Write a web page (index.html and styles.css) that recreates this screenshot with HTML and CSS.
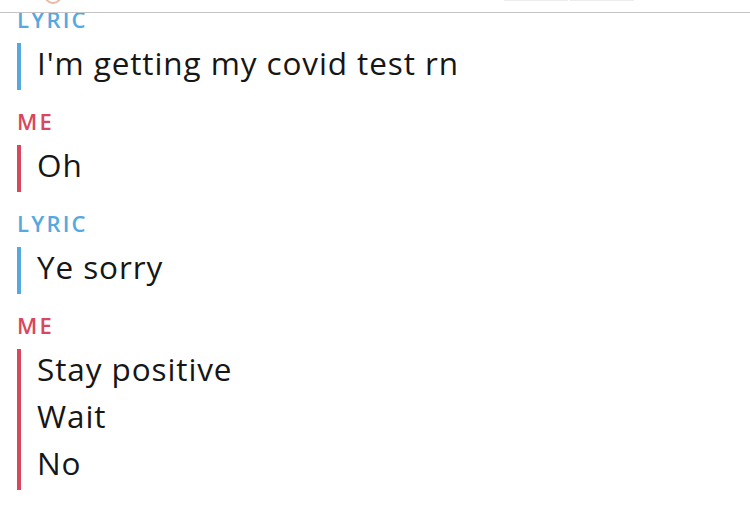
FILE: index.html
```html
<!DOCTYPE html>
<html>
<head>
<meta charset="utf-8">
<link rel="stylesheet" href="styles.css">
</head>
<body>
<div class="top">
  <div class="top-dot"></div>
  <div class="top-tabs"><span class="tab"></span><span class="tab"></span></div>
</div>
<main class="chat">
  <section class="group lyric">
    <div class="name">LYRIC</div>
    <div class="msgs">
      <div class="msg">I'm getting my covid test rn</div>
    </div>
  </section>
  <section class="group me">
    <div class="name">ME</div>
    <div class="msgs">
      <div class="msg">Oh</div>
    </div>
  </section>
  <section class="group lyric">
    <div class="name">LYRIC</div>
    <div class="msgs">
      <div class="msg">Ye sorry</div>
    </div>
  </section>
  <section class="group me">
    <div class="name">ME</div>
    <div class="msgs">
      <div class="msg">Stay positive</div>
      <div class="msg">Wait</div>
      <div class="msg">No</div>
    </div>
  </section>
</main>
</body>
</html>
```
FILE: styles.css
```css
* { box-sizing: border-box; }
html, body {
  margin: 0;
  padding: 0;
  background: #ffffff;
  width: 750px;
  height: 509px;
  overflow: hidden;
}
body {
  font-family: "Open Sans", Lato, sans-serif;
  color: #161616;
}
.top {
  height: 13px;
  border-bottom: 1px solid #c4c4c4;
  position: relative;
}
.top-dot {
  position: absolute;
  left: 44px;
  top: -14px;
  width: 18px;
  height: 18px;
  border-radius: 50%;
  border: 2px solid #e8b9a8;
}
.top-tabs {
  position: absolute;
  left: 504px;
  top: 0;
  display: flex;
  gap: 2px;
}
.tab {
  width: 64px;
  height: 1px;
  background: #ececec;
}
.chat {
  display: flex;
  flex-direction: column;
  gap: 25px;
  padding-left: 17px;
}
.name {
  font-size: 22px;
  font-weight: 600;
  letter-spacing: 2.2px;
  line-height: 13px;
  height: 14px;
  margin-bottom: 16px;
}
.lyric .name { color: #56a8e0; }
.me .name { color: #d8475e; }
.msg {
  font-size: 31.5px;
  letter-spacing: 0.9px;
  line-height: 40px;
  height: 47px;
  padding-bottom: 7px;
  padding-left: 16px;
  border-left: 4px solid;
}
.lyric .msg { border-left-color: #56a8e0; }
.me .msg { border-left-color: #d8475e; }
```
